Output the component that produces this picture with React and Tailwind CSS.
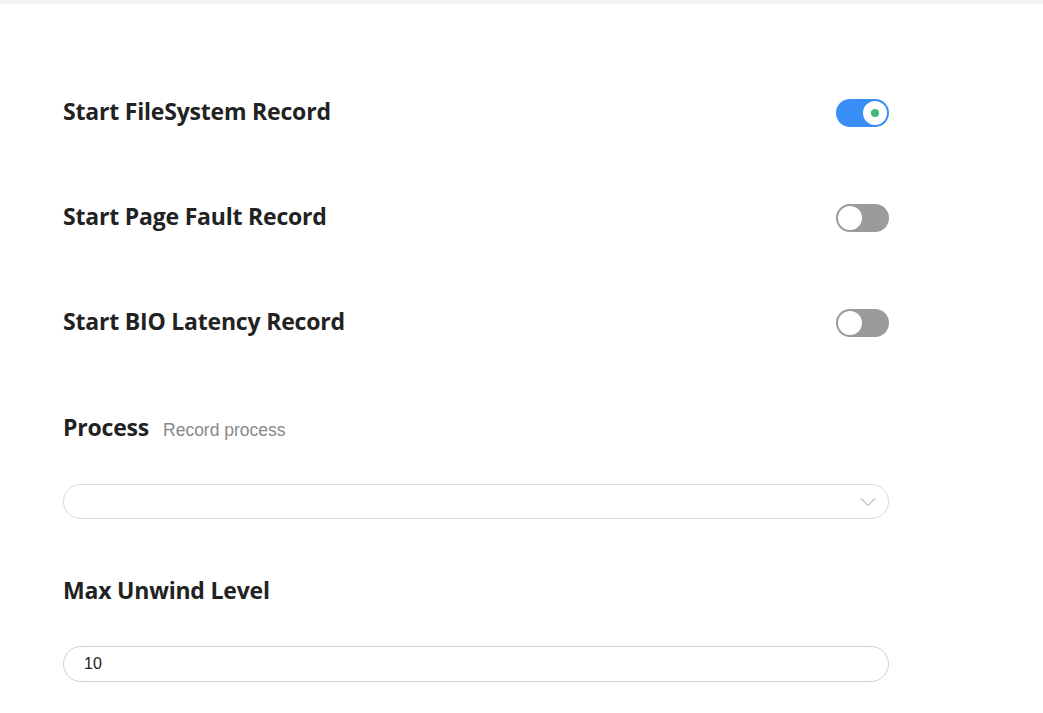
import React from "react";

const heading = { fontFamily: '"Open Sans", sans-serif' };

function Toggle({ on }) {
  return (
    <div
      className={
        "mt-[2px] w-[53px] h-[28px] rounded-full p-[2px] flex items-center " +
        (on ? "bg-[#3a8ef7] justify-end" : "bg-[#9b9b9b] justify-start")
      }
    >
      <div className="w-[24px] h-[24px] rounded-full bg-white flex items-center justify-center">
        {on && <div className="w-[8px] h-[8px] rounded-full bg-[#3dba7a]" />}
      </div>
    </div>
  );
}

function SwitchRow({ label, on }) {
  return (
    <div className="h-[105px] flex items-center justify-between w-[826px]">
      <span className="text-[23px] font-bold text-[#222] tracking-[-0.2px] leading-none" style={heading}>
        {label}
      </span>
      <Toggle on={on} />
    </div>
  );
}

export default function App() {
  return (
    <div className="w-[1043px] h-[713px] bg-white overflow-hidden" style={{ fontFamily: '"Liberation Sans", Arial, sans-serif' }}>
      <div className="h-[4px] bg-[#f5f5f5]" />
      <div className="pl-[63px] pt-[55px]">
        <SwitchRow label="Start FileSystem Record" on />
        <SwitchRow label="Start Page Fault Record" />
        <SwitchRow label="Start BIO Latency Record" />
        <div className="flex items-baseline gap-[14px] h-[30px] mt-[36px]">
          <span className="text-[23px] font-bold text-[#222] tracking-[-0.2px]" style={heading}>Process</span>
          <span className="text-[17.5px] text-[#888]">Record process</span>
        </div>
        <div className="mt-[44px] w-[826px] h-[35px] rounded-full border border-[#dcdcdc] flex items-center justify-end pr-[12px]">
          <svg width="16" height="10" viewBox="0 0 16 10" fill="none">
            <path d="M1 1.5 L8 8.5 L15 1.5" stroke="#c0c0c0" strokeWidth="1.2" />
          </svg>
        </div>
        <div className="mt-[56px] h-[30px] flex items-center">
          <span className="text-[23px] font-bold text-[#222] tracking-[-0.2px]" style={heading}>Max Unwind Level</span>
        </div>
        <div className="mt-[41px] w-[826px] h-[36px] rounded-full border border-[#d0d0d0] flex items-center pl-[20px] text-[16px] text-[#222]">
          10
        </div>
      </div>
    </div>
  );
}
